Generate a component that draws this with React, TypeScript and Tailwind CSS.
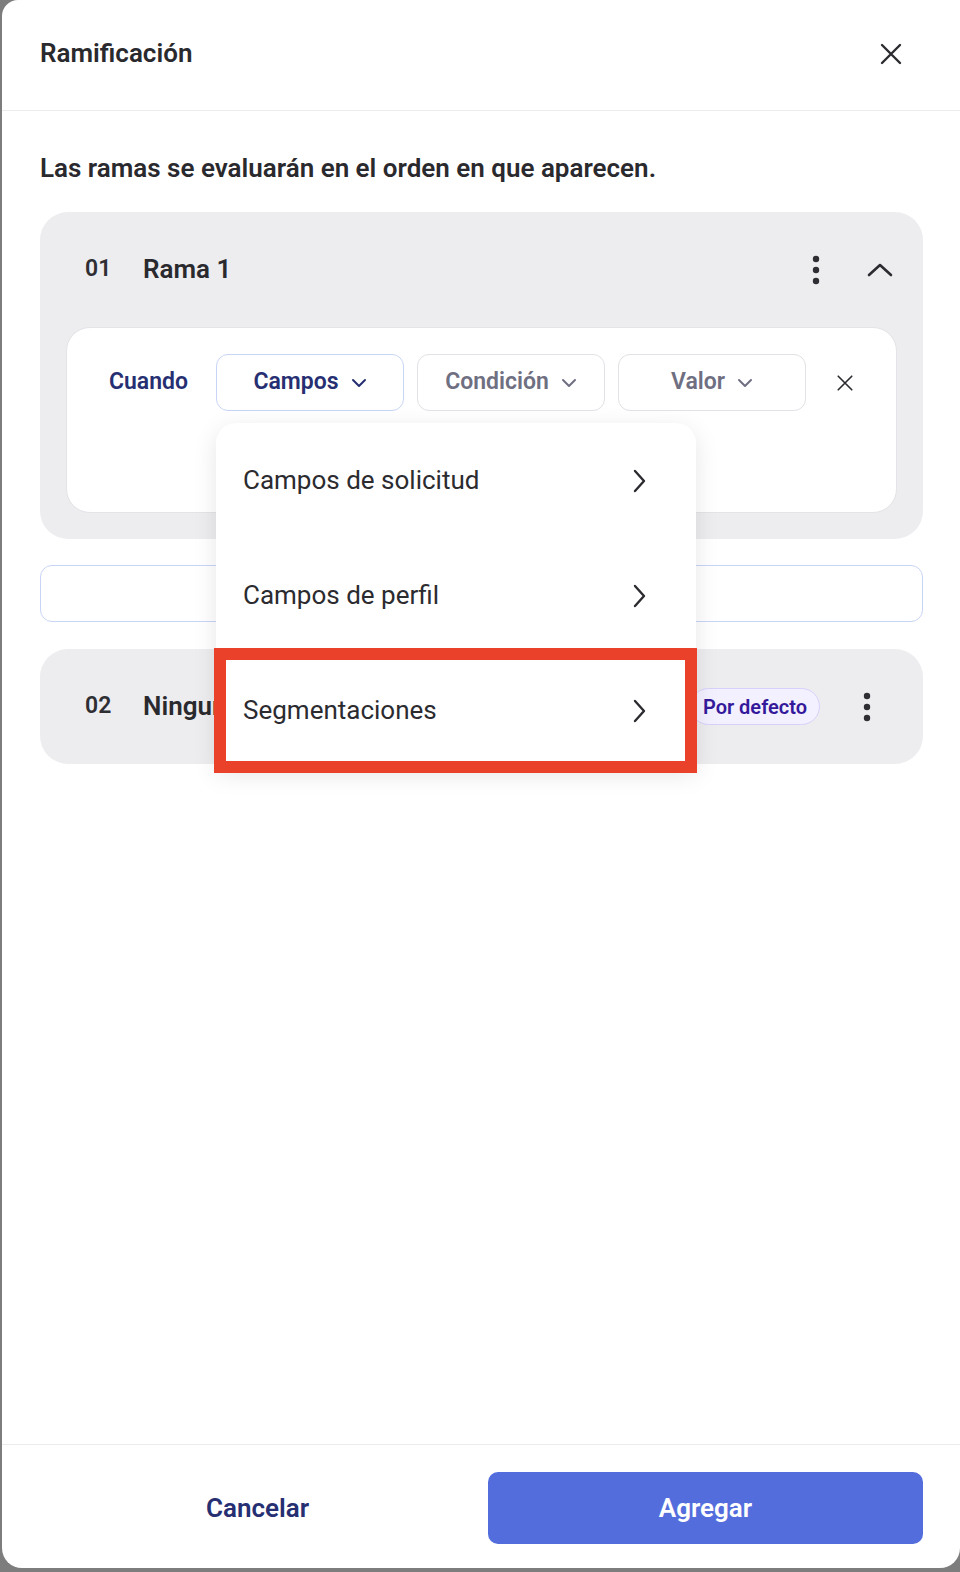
import React from "react"

function Kebab() {
    return (
        <svg width="8" height="30" viewBox="0 0 8 30" className="text-[#2e2e33]">
            <circle cx="4" cy="4" r="3.2" fill="currentColor" />
            <circle cx="4" cy="15" r="3.2" fill="currentColor" />
            <circle cx="4" cy="26" r="3.2" fill="currentColor" />
        </svg>
    )
}

function ChevronDown({ className }: { className?: string }) {
    return (
        <svg width="16" height="10" viewBox="0 0 16 10" fill="none" className={className}>
            <path d="M2 2l6 6 6-6" stroke="currentColor" strokeWidth="2" strokeLinecap="round" strokeLinejoin="round" />
        </svg>
    )
}

function ChevronRight() {
    return (
        <svg width="14" height="24" viewBox="0 0 14 24" fill="none" className="text-[#2b2b30]">
            <path d="M3 2l9 10-9 10" stroke="currentColor" strokeWidth="2.4" strokeLinecap="round" strokeLinejoin="round" />
        </svg>
    )
}

function CloseIcon({ size, stroke }: { size: number; stroke: number }) {
    return (
        <svg width={size} height={size} viewBox="0 0 24 24" fill="none" className="text-[#2b2b30]">
            <path d="M3 3l18 18M21 3L3 21" stroke="currentColor" strokeWidth={stroke} strokeLinecap="round" />
        </svg>
    )
}

function SelectButton({ label, active }: { label: string; active?: boolean }) {
    return (
        <div
            className={
                active
                    ? "flex h-[57px] w-[188px] items-center justify-center gap-[12px] rounded-[12px] border border-[#c9d5f7] text-[23px] font-semibold text-[#262f72]"
                    : "flex h-[57px] w-[188px] items-center justify-center gap-[12px] rounded-[12px] border border-[#e1e1e6] text-[23px] font-semibold text-[#6f6f82]"
            }
        >
            <span>{label}</span>
            <ChevronDown />
        </div>
    )
}

const menuItems = ["Campos de solicitud", "Campos de perfil", "Segmentaciones"]

export default function App() {
    return (
        <div className="h-[1572px] bg-[#7d7d7d] pb-[4px] pl-[2px] font-['Roboto',sans-serif]">
            <div className="flex h-full flex-col rounded-tl-[16px] rounded-b-[20px] bg-white">
                <div className="flex h-[111px] shrink-0 items-center justify-between border-b border-[#ececee] pb-[3px] pl-[38px] pr-[57px]">
                    <h1 className="text-[26px] font-semibold text-[#2a2a2e]">Ramificación</h1>
                    <CloseIcon size={24} stroke={2.4} />
                </div>

                <div className="relative flex-1 pl-[38px] pr-[37px] pt-[41px]">
                    <p className="text-[26px] font-semibold leading-[32px] text-[#2a2a2e]">
                        Las ramas se evaluarán en el orden en que aparecen.
                    </p>

                    <div className="mt-[28px] rounded-[28px] bg-[#ededf0] px-[26px] pb-[26px]">
                        <div className="flex h-[115px] items-center pl-[19px] pr-[4px]">
                            <span className="w-[58px] text-[23px] font-semibold text-[#2e2e33]">01</span>
                            <span className="flex-1 text-[26px] font-semibold text-[#2a2a2e]">Rama 1</span>
                            <Kebab />
                            <svg width="26" height="16" viewBox="0 0 26 16" fill="none" className="ml-[47px] text-[#2b2b30]">
                                <path d="M2 13L13 3l11 10" stroke="currentColor" strokeWidth="2.6" strokeLinecap="round" strokeLinejoin="round" />
                            </svg>
                        </div>
                        <div className="h-[186px] rounded-[24px] border border-[#e3e3e8] bg-white px-[42px] pt-[26px]">
                            <div className="flex items-center">
                                <span className="w-[108px] text-[23px] font-semibold text-[#262f72]">Cuando</span>
                                <div className="flex gap-[13px]">
                                    <SelectButton label="Campos" active />
                                    <SelectButton label="Condición" />
                                    <SelectButton label="Valor" />
                                </div>
                                <span className="ml-[30px]">
                                    <CloseIcon size={18} stroke={2.2} />
                                </span>
                            </div>
                        </div>
                    </div>

                    <div className="mt-[26px] h-[57px] rounded-[12px] border border-[#c9d5f7]" />

                    <div className="mt-[27px] flex h-[115px] items-center rounded-[28px] bg-[#ededf0] pl-[45px] pr-[52px]">
                        <span className="w-[58px] text-[23px] font-semibold text-[#2e2e33]">02</span>
                        <span className="w-[73px] overflow-hidden whitespace-nowrap text-[26px] font-semibold text-[#2a2a2e]">Ninguna coincidencia</span>
                        <span className="flex-1" />
                        <span className="mr-[43px] flex h-[37px] items-center rounded-full border border-[#d8d0fb] bg-[#f3f0ff] px-[12px] text-[20px] font-semibold text-[#34199b]">
                            Por defecto
                        </span>
                        <Kebab />
                    </div>

                    <div className="absolute left-[214px] top-[312px] w-[480px] rounded-t-[20px] bg-white shadow-[0_6px_24px_rgba(0,0,0,0.10)]">
                        {menuItems.map((item) => (
                            <div key={item} className="flex h-[115px] items-center justify-between pl-[27px] pr-[50px] text-[26px] text-[#2b2b30]">
                                <span>{item}</span>
                                <ChevronRight />
                            </div>
                        ))}
                        <div className="absolute left-[-2px] top-[225px] h-[125px] w-[483px] border-[12px] border-[#e9412a]" />
                    </div>
                </div>

                <div className="flex h-[124px] shrink-0 gap-[13px] border-t border-[#ececee] pl-[38px] pr-[37px] pt-[27px]">
                    <button className="flex h-[72px] flex-1 items-center justify-center text-[26px] font-semibold text-[#262f72]">
                        Cancelar
                    </button>
                    <button className="flex h-[72px] flex-1 items-center justify-center rounded-[10px] bg-[#536ddd] text-[26px] font-semibold text-white">
                        Agregar
                    </button>
                </div>
            </div>
        </div>
    )
}
